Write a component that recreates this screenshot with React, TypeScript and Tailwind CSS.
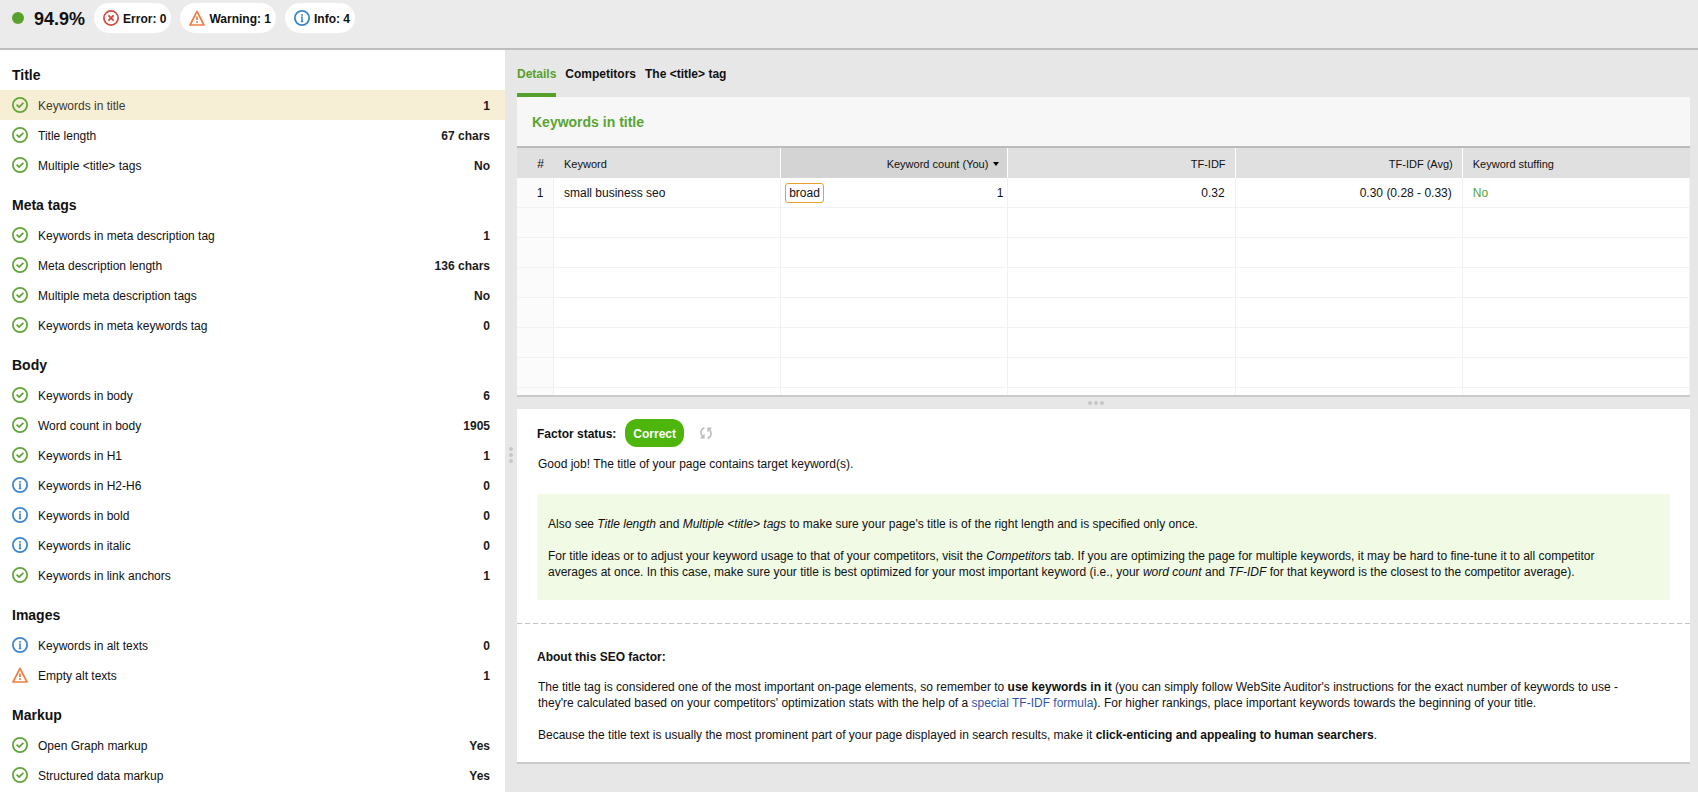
import React from "react";

type Kind = "ok" | "info" | "warning" | "error";

function StatusIcon({ kind }: { kind: Kind }) {
  const common = {
    width: 16,
    height: 16,
    viewBox: "0 0 16 16",
    fill: "none",
    className: "block shrink-0",
    "aria-hidden": true,
  } as const;
  if (kind === "ok")
    return (
      <svg {...common} stroke="#62a63b">
        <circle cx="8" cy="8" r="7.1" strokeWidth="1.8" />
        <path d="M4.6 7.7l2.5 2.4 4.3-4.2" strokeWidth="1.8" />
      </svg>
    );
  if (kind === "info")
    return (
      <svg {...common} stroke="#3c87c8">
        <circle cx="8" cy="8" r="7.1" strokeWidth="1.8" />
        <path d="M8 4v1.8M7 7.3h1v4M6.8 11.5h2.4" strokeWidth="1.5" />
      </svg>
    );
  if (kind === "warning")
    return (
      <svg {...common} stroke="#f07c43">
        <path d="M8 1.4L15 15H1z" strokeWidth="1.7" strokeLinejoin="round" />
        <path d="M8 6.4v3.6M8 11.2v1.8" strokeWidth="1.7" />
      </svg>
    );
  return (
    <svg {...common} stroke="#d0493f">
      <circle cx="8" cy="8" r="7.1" strokeWidth="1.7" />
      <path d="M5.4 5.4l5.2 5.2M10.6 5.4l-5.2 5.2" strokeWidth="1.9" />
    </svg>
  );
}

const groups: { title: string; rows: [Kind, string, string][] }[] = [
  {
    title: "Title",
    rows: [
      ["ok", "Keywords in title", "1"],
      ["ok", "Title length", "67 chars"],
      ["ok", "Multiple <title> tags", "No"],
    ],
  },
  {
    title: "Meta tags",
    rows: [
      ["ok", "Keywords in meta description tag", "1"],
      ["ok", "Meta description length", "136 chars"],
      ["ok", "Multiple meta description tags", "No"],
      ["ok", "Keywords in meta keywords tag", "0"],
    ],
  },
  {
    title: "Body",
    rows: [
      ["ok", "Keywords in body", "6"],
      ["ok", "Word count in body", "1905"],
      ["ok", "Keywords in H1", "1"],
      ["info", "Keywords in H2-H6", "0"],
      ["info", "Keywords in bold", "0"],
      ["info", "Keywords in italic", "0"],
      ["ok", "Keywords in link anchors", "1"],
    ],
  },
  {
    title: "Images",
    rows: [
      ["info", "Keywords in alt texts", "0"],
      ["warning", "Empty alt texts", "1"],
    ],
  },
  {
    title: "Markup",
    rows: [
      ["ok", "Open Graph markup", "Yes"],
      ["ok", "Structured data markup", "Yes"],
    ],
  },
];

const counters: [Kind, string][] = [
  ["error", "Error: 0"],
  ["warning", "Warning: 1"],
  ["info", "Info: 4"],
];

function Header() {
  return (
    <header className="flex h-[50px] items-start gap-[9px] border-b-2 border-[#bdbdbd] bg-[#ebebeb] pt-[3px] pl-3">
      <div className="flex h-[30px] items-center gap-[10px] text-lg font-bold">
        <span className="size-3 rounded-full bg-[#5aa02c]" />
        <span className="pt-[2px]">94.9%</span>
      </div>
      {counters.map(([kind, label]) => (
        <button
          key={label}
          type="button"
          className="flex h-[30px] items-center gap-1 rounded-full bg-white pr-[5px] pl-[9px] font-bold"
        >
          <StatusIcon kind={kind} />
          <span className="pt-[2px]">{label}</span>
        </button>
      ))}
    </header>
  );
}

function Sidebar() {
  return (
    <nav className="w-[505px] shrink-0 bg-white">
      {groups.map((group) => (
        <section key={group.title}>
          <h2 className="flex h-10 items-center px-3 pt-[10px] text-sm font-bold">{group.title}</h2>
          <ul>
            {group.rows.map(([kind, label, value]) => (
              <li key={label}>
                <button
                  type="button"
                  className={
                    label === "Keywords in title"
                      ? "flex h-[30px] w-full items-center gap-[10px] bg-[#f7eed6] pr-[15px] pl-3 text-left text-[#3f3a30]"
                      : "flex h-[30px] w-full items-center gap-[10px] pr-[15px] pl-3 text-left"
                  }
                >
                  <StatusIcon kind={kind} />
                  <span className="flex-1 pt-[2px]">{label}</span>
                  <span className="pt-[2px] font-bold text-[#1a1a1a]">{value}</span>
                </button>
              </li>
            ))}
          </ul>
        </section>
      ))}
    </nav>
  );
}

function Grip({ vertical = false }: { vertical?: boolean }) {
  return (
    <div className={vertical ? "flex flex-col gap-[2px]" : "flex gap-[2px]"}>
      <span className="size-1 rounded-full bg-[#c6c6c6]" />
      <span className="size-1 rounded-full bg-[#c6c6c6]" />
      <span className="size-1 rounded-full bg-[#c6c6c6]" />
    </div>
  );
}

function KeywordTable() {
  return (
    <div className="h-[249px] overflow-hidden border-b-2 border-[#c9c9c9] bg-white">
      <table className="w-full table-fixed border-separate border-spacing-0">
        <colgroup>
          <col className="w-[37px]" />
          <col />
          <col />
          <col />
          <col />
          <col />
        </colgroup>
        <thead>
          <tr className="h-[30px] bg-[#e0e0e0] text-[11px] *:border-white *:p-0 *:pt-[2px] *:font-normal">
            <th className="pl-[10px]! text-xs">#</th>
            <th className="border-r pl-[10px]! text-left">Keyword</th>
            <th className="border-r bg-[#d4d4d4] pr-2! text-right">
              <button type="button" className="inline-flex items-center gap-[5px]">
                Keyword count (You)
                <svg width="6" height="4" viewBox="0 0 6 4" aria-hidden="true">
                  <path d="M0 0h6L3 4z" fill="#000" />
                </svg>
              </button>
            </th>
            <th className="border-r pr-[9px]! text-right">TF-IDF</th>
            <th className="border-r pr-[9px]! text-right">TF-IDF (Avg)</th>
            <th className="pl-[10px]! text-left">Keyword stuffing</th>
          </tr>
        </thead>
        <tbody className="[&_td]:border-r [&_td]:border-b [&_td]:border-[#f1f1f1]">
          <tr className="h-[30px] *:p-0">
            <td className="bg-[#fbfbfb] pl-[10px]! text-center">1</td>
            <td className="pl-[10px]!">small business seo</td>
            <td className="pr-1! pl-1!">
              <div className="flex items-center justify-between">
                <span className="rounded-[3px] border border-[#e9a12a] px-[3px] py-px">broad</span>1
              </div>
            </td>
            <td className="pr-[10px]! text-right">0.32</td>
            <td className="pr-[10px]! text-right">0.30 (0.28 - 0.33)</td>
            <td className="pl-[10px]! text-[#58a532]">No</td>
          </tr>
          {[1, 2, 3, 4, 5, 6, 7].map((row) => (
            <tr key={row} className="h-[30px]">
              <td className="bg-[#fbfbfb]" />
              <td />
              <td />
              <td />
              <td />
              <td />
            </tr>
          ))}
        </tbody>
      </table>
    </div>
  );
}

function FactorPanel() {
  return (
    <article className="border-b-2 border-[#c9c9c9] bg-white">
      <div className="px-5 pt-[10px] pb-[23px]">
        <div className="flex items-center gap-[9px]">
          <h3 className="pt-[2px] font-bold">Factor status:</h3>
          <span className="flex h-7 items-center rounded-xl bg-[#4db50c] px-2 pt-[2px] font-bold text-white">Correct</span>
          <button type="button" aria-label="Refresh" className="ml-[6px]">
            <svg width="14" height="14" viewBox="0 0 14 14" fill="none" stroke="#bdbdbd" strokeWidth="1.5" aria-hidden="true">
              <path d="M5.5 1.8C1.2 2.8.6 8.6 4.6 11.4M4.9 8.3v3.4H1.6" />
              <path d="M8.5 12.2c4.3-1 4.9-6.8.9-9.6M9.1 5.7V2.3h3.3" />
            </svg>
          </button>
        </div>
        <p className="mt-[9px] pl-px leading-4">Good job! The title of your page contains target keyword(s).</p>
        <div className="mt-[22px] bg-[#f0fae4] pt-[22px] pr-[55px] pb-5 pl-[11px] leading-4">
          <p>
            Also see <i>Title length</i> and <i>Multiple &lt;title&gt; tags</i> to make sure your page's title is of the
            right length and is specified only once.
          </p>
          <p className="mt-4">
            For title ideas or to adjust your keyword usage to that of your competitors, visit the <i>Competitors</i>{" "}
            tab. If you are optimizing the page for multiple keywords, it may be hard to fine-tune it to all competitor
            averages at once. In this case, make sure your title is best optimized for your most important keyword
            (i.e., your <i>word count</i> and <i>TF-IDF</i> for that keyword is the closest to the competitor average).
          </p>
        </div>
      </div>
      <div className="h-px bg-[repeating-linear-gradient(90deg,#c4c4c4_0_5px,transparent_5px_8px)]" />
      <div className="pt-[25px] pr-[50px] pb-[19px] pl-5 leading-4">
        <h3 className="font-bold">About this SEO factor:</h3>
        <p className="mt-[14px] pl-px">
          The title tag is considered one of the most important on-page elements, so remember to{" "}
          <b>use keywords in it</b> (you can simply follow WebSite Auditor's instructions for the exact number of
          keywords to use - they're calculated based on your competitors' optimization stats with the help of a{" "}
          <a href="#formula" className="text-[#2f55a4]">special TF-IDF formula</a>). For higher rankings, place
          important keywords towards the beginning of your title.
        </p>
        <p className="mt-4 pl-px">
          Because the title text is usually the most prominent part of your page displayed in search results, make it{" "}
          <b>click-enticing and appealing to human searchers</b>.
        </p>
      </div>
    </article>
  );
}

export default function App() {
  return (
    <div className="flex min-h-screen flex-col bg-[#e7e7e7] font-['Liberation_Sans',Arial,sans-serif] text-xs text-[#111]">
      <Header />
      <div className="flex flex-1">
        <Sidebar />
        <div className="flex w-3 shrink-0 items-center justify-center pt-[68px]">
          <Grip vertical />
        </div>
        <main className="min-w-0 flex-1 pr-2">
          <div role="tablist" className="flex h-[47px] gap-[9px] font-bold">
            <button type="button" role="tab" aria-selected="true" className="border-b-4 border-[#55a02c] pt-1 text-[#55a02c]">
              Details
            </button>
            <button type="button" role="tab" aria-selected="false" className="border-b-4 border-transparent pt-1">
              Competitors
            </button>
            <button type="button" role="tab" aria-selected="false" className="border-b-4 border-transparent pt-1">
              The &lt;title&gt; tag
            </button>
          </div>
          <h2 className="flex h-[51px] items-center border-b-2 border-[#bcbcbc] bg-[#f7f7f7] px-[15px] text-sm font-bold text-[#58a532]">
            Keywords in title
          </h2>
          <KeywordTable />
          <div className="flex h-3 items-center justify-center pr-4">
            <Grip />
          </div>
          <FactorPanel />
        </main>
      </div>
    </div>
  );
}
